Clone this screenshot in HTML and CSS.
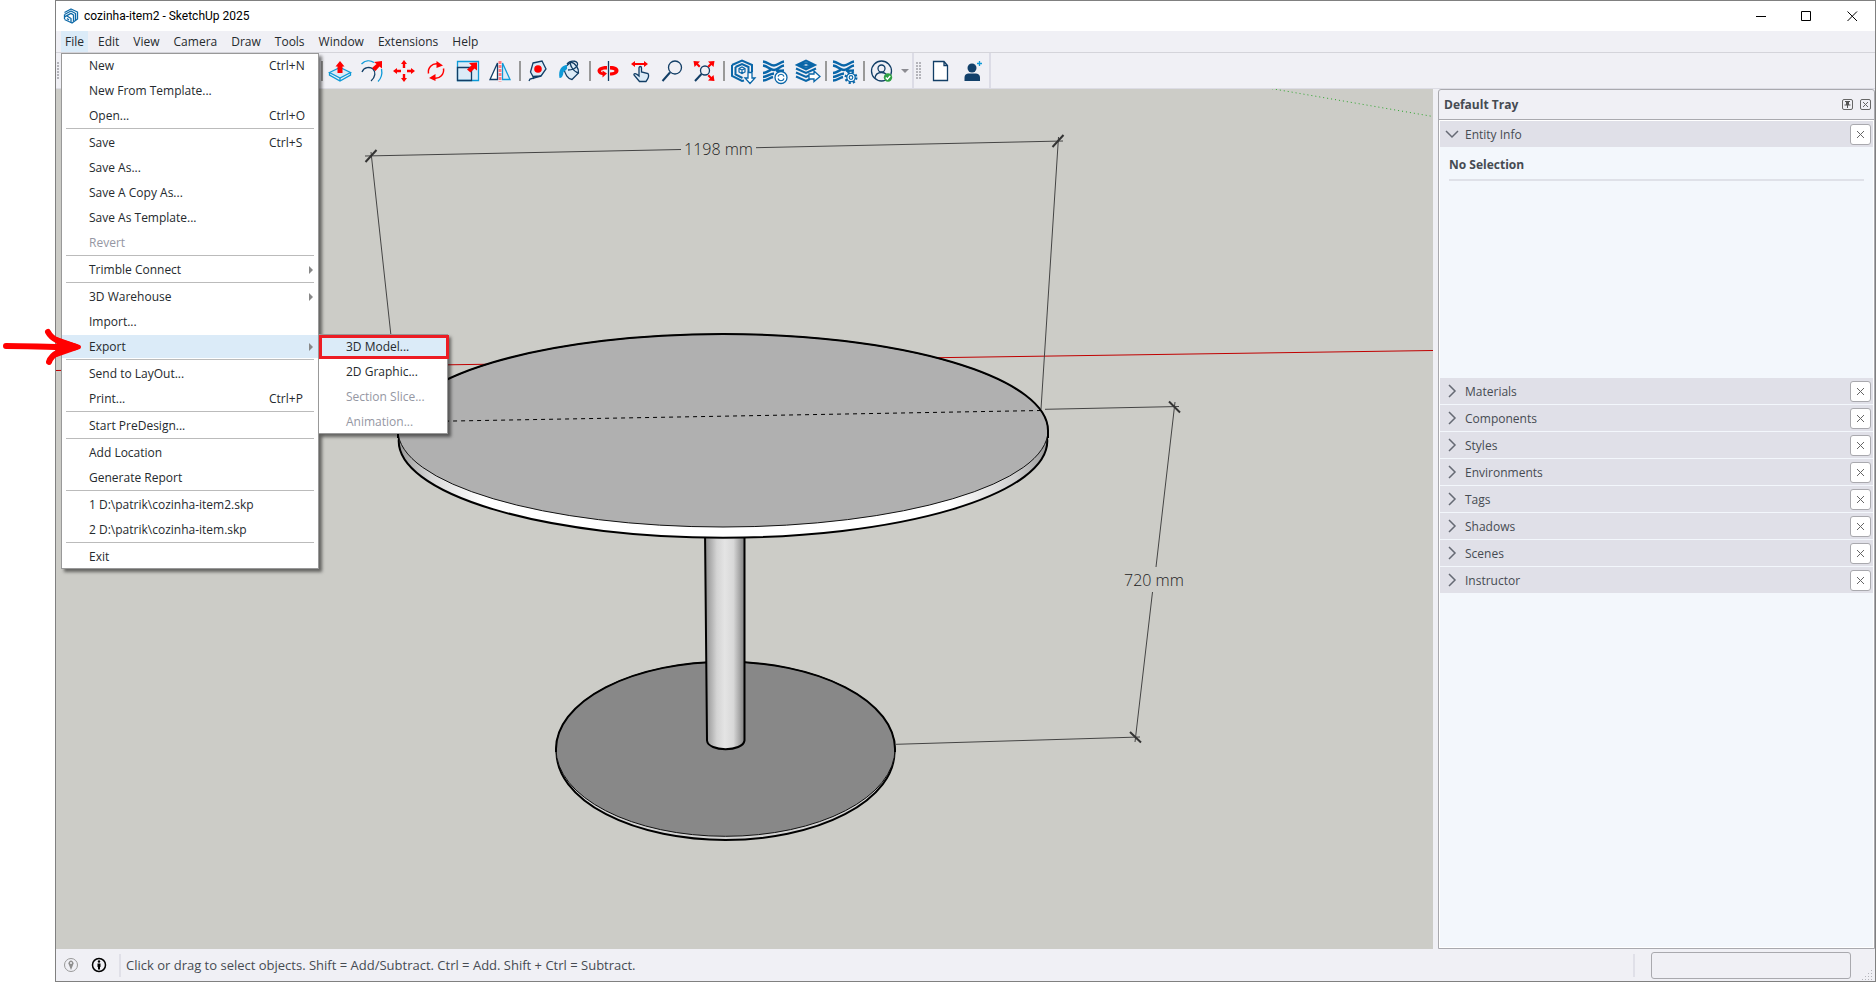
FILE: index.html
```html
<!DOCTYPE html>
<html lang="en">
<head>
  <meta charset="UTF-8" />
  <meta name="viewport" content="width=device-width, initial-scale=1.0"/>
  <title>cozinha-item2 - SketchUp 2025</title>
  <link rel="stylesheet" href="styles.css">
</head>
<body>
  <svg class="pointer" width="80" height="38" viewBox="0 0 80 38" fill="none" stroke="#f00" stroke-linecap="round" stroke-linejoin="round">
    <path d="M4 18 C25 18 45 19 66 19" stroke-width="6"/>
    <path d="M46 4 C50 12 60 15 74 19 C60 22 50 25 47 34" stroke-width="6"/>
    <path d="M54 11 L77 19 L54 27 L59 19 Z" fill="#f00" stroke-width="4"/>
  </svg>

  <div class="window">
    <header class="titlebar">
      <svg class="logo" width="16" height="16" viewBox="0 0 16 16" fill="none" stroke="#0f6aa8" stroke-width="1.3" stroke-linejoin="round">
        <path d="M1.5 4.5 L8 1 L14.5 4 V11 L9 15 L1.5 11.5"/>
        <path d="M1.5 6.5 L8 3 L12.5 5.5 V12"/>
        <path d="M1.5 8.8 L8 5.4 L10.5 7 V13.5"/>
        <path d="M1.5 6.5 V11 M4 8 L8 10.5 V14.5 M4 10.5 L6 12"/>
      </svg>
      <h1 class="title">cozinha-item2 - SketchUp 2025</h1>
      <button class="win-btn" aria-label="Minimize"><svg width="11" height="11"><path d="M1 5.5 H11"/></svg></button>
      <button class="win-btn" aria-label="Maximize"><svg width="11" height="11"><path d="M.5 .5 H9.5 V9.5 H.5 Z"/></svg></button>
      <button class="win-btn" aria-label="Close"><svg width="11" height="11"><path d="M.5 .5 L10 10 M10 .5 L.5 10"/></svg></button>
    </header>

    <nav class="menubar">
      <div class="menu-root">
        <button class="menu-btn open">File</button>
        <ul class="menu">
          <li><button>New <kbd>Ctrl+N</kbd></button></li>
          <li><button>New From Template...</button></li>
          <li><button>Open... <kbd>Ctrl+O</kbd></button></li>
          <li class="line"></li>
          <li><button>Save <kbd>Ctrl+S</kbd></button></li>
          <li><button>Save As...</button></li>
          <li><button>Save A Copy As...</button></li>
          <li><button>Save As Template...</button></li>
          <li><button disabled>Revert</button></li>
          <li class="line"></li>
          <li><button class="more">Trimble Connect</button></li>
          <li class="line"></li>
          <li><button class="more">3D Warehouse</button></li>
          <li><button>Import...</button></li>
          <li>
            <button class="more active">Export</button>
            <ul class="menu submenu">
              <li class="marked"><button class="active">3D Model...</button></li>
              <li><button>2D Graphic...</button></li>
              <li><button disabled>Section Slice...</button></li>
              <li><button disabled>Animation...</button></li>
            </ul>
          </li>
          <li class="line"></li>
          <li><button>Send to LayOut...</button></li>
          <li><button>Print... <kbd>Ctrl+P</kbd></button></li>
          <li class="line"></li>
          <li><button>Start PreDesign...</button></li>
          <li class="line"></li>
          <li><button>Add Location</button></li>
          <li><button>Generate Report</button></li>
          <li class="line"></li>
          <li><button>1 D:\patrik\cozinha-item2.skp</button></li>
          <li><button>2 D:\patrik\cozinha-item.skp</button></li>
          <li class="line"></li>
          <li><button>Exit</button></li>
        </ul>
      </div>
      <button class="menu-btn">Edit</button>
      <button class="menu-btn">View</button>
      <button class="menu-btn">Camera</button>
      <button class="menu-btn">Draw</button>
      <button class="menu-btn">Tools</button>
      <button class="menu-btn">Window</button>
      <button class="menu-btn">Extensions</button>
      <button class="menu-btn">Help</button>
    </nav>

    <div class="toolbar">
      <div class="tools">
        <span class="grip"></span>
        <button class="tool" aria-label="Search"></button>
        <button class="tool" aria-label="Select"></button>
        <button class="tool" aria-label="Eraser"></button>
        <button class="tool" aria-label="Line"></button>
        <button class="tool" aria-label="Freehand"></button>
        <button class="tool" aria-label="Arc"></button>
        <button class="tool" aria-label="Rectangle"></button>
        <button class="tool" aria-label="Circle"></button>
        <span class="sep"></span>
        <button class="tool" aria-label="Push/Pull">
          <svg viewBox="0 0 24 24">
            <path class="cy fill" d="M1.500 13.500 L12 8.500 L22.500 13.500 L12 19 Z"/>
            <path class="cy" d="M1.500 13.500 V16 L12 22 L22.500 16 V13.500 M12 19 V22"/>
            <path class="red" d="M12 2 L16.500 7.500 H14.500 V14 H9.500 V7.500 H7.500 Z"/>
          </svg>
        </button>
        <button class="tool" aria-label="Offset">
          <svg viewBox="0 0 24 24">
            <path class="cy" d="M1.500 5 C5 1.500 10 1 14 3.500 M21.500 10 C22.500 15 21.500 19 18 22.500"/>
            <path class="nv" d="M2 13 C4 8 10 7.500 13 10 C16 13 15.500 18 11 22"/>
            <path class="red" d="M22 2 V9.500 L19.500 7.500 L15.500 12 L12 9 L16.500 5 L14 3 Z"/>
          </svg>
        </button>
        <button class="tool" aria-label="Move">
          <svg viewBox="0 0 24 24">
            <path class="red" d="M12 1 L15 5 H13.200 V9 H10.800 V5 H9 Z M12 23 L15 19 H13.200 V15 H10.800 V19 H9 Z M1 12 L5 9 V10.800 H9 V13.200 H5 V15 Z M23 12 L19 9 V10.800 H15 V13.200 H19 V15 Z"/>
          </svg>
        </button>
        <button class="tool" aria-label="Rotate">
          <svg viewBox="0 0 24 24">
            <path class="rd" d="M4.500 14.500 C3.500 9 8 4 14 5 M19.500 9.500 C20.500 15 16 20 10 19"/>
            <path class="red" d="M12.500 2 L19 6.500 L12.500 9 Z M11.500 15 V22 L5 19 Z"/>
          </svg>
        </button>
        <button class="tool" aria-label="Scale">
          <svg viewBox="0 0 24 24">
            <path class="cy fill" d="M1.500 2.500 H22.500 V21.500 H1.500 Z"/>
            <path class="nv" d="M1.500 8.500 H15.500 V21.500 H1.500 Z"/>
            <path class="red" d="M21 3.500 V11.500 L18.500 9.500 L14.500 13.500 L11 10.500 L15.500 6.500 L13 4 Z"/>
          </svg>
        </button>
        <button class="tool" aria-label="Flip">
          <svg viewBox="0 0 24 24">
            <path class="nv white" d="M9.500 4 V20.500 H2 Z"/>
            <path class="cy fill" d="M14.500 4 V20.500 H22 Z"/>
            <path class="flip-line" d="M12 2 V22.500"/>
          </svg>
        </button>
        <span class="sep"></span>
        <button class="tool" aria-label="Tape Measure">
          <svg viewBox="0 0 24 24">
            <path class="nv fill" d="M7 4 L16 2 L20 10 L15 17 L7 17.500 L4.500 13 Z"/>
            <path class="nv" d="M15 17 L4 20 L3 22 M7 17.500 L8 20"/>
            <circle class="red" cx="12" cy="10" r="3.800"/>
          </svg>
        </button>
        <button class="tool" aria-label="Paint Bucket">
          <svg viewBox="0 0 24 24">
            <path class="nv fill" d="M6 9 L13 3 C17 4 21 9 20.500 14 L14 20.500 C10 20 6.500 15 6 9 Z"/>
            <path class="nv" d="M13 3 C11 6 16 13 20.500 14 M9 5 C13 0 22 2 19 7 C17 10 13 11 10 11"/>
            <path class="cyan" d="M9 6 C4 6 0 11 1.500 19 C4 19 5 17 5.500 13 L9 10 Z"/>
          </svg>
        </button>
        <span class="sep"></span>
        <button class="tool" aria-label="Orbit">
          <svg viewBox="0 0 24 24">
            <path class="nv" d="M12.500 2 V22"/>
            <path class="red" d="M11 7 C4 7 1.500 9.500 1.500 12 C2 15 5 16 6.500 16 V18.500 L11 14.500 L6.500 11.500 V13.500 C4 12.500 4 10.500 11 10.500 Z M14 7 C20 7 22.500 9 22.500 11.500 C22.500 15 19 16.500 14 16.500 V13.500 C20 13 20 11 14 10.500 Z"/>
          </svg>
        </button>
        <button class="tool" aria-label="Pan">
          <svg viewBox="0 0 24 24">
            <path class="nv fill" d="M11 9 C11 7 13.500 7 13.500 9 V13 L20 14.500 C21.500 17 20 20 18 22.500 H11.500 L6 16 C5.500 14 8 14 11 17 Z"/>
            <path class="red" d="M3 5 L7 2 V4 H16 V2 L20 5 L16 8 V6 H7 V8 Z"/>
          </svg>
        </button>
        <button class="tool" aria-label="Zoom">
          <svg viewBox="0 0 24 24">
            <circle class="nv" cx="15" cy="8.500" r="6.500"/>
            <path class="nv thick" d="M10 13.500 L2.500 22"/>
          </svg>
        </button>
        <button class="tool" aria-label="Zoom Extents">
          <svg viewBox="0 0 24 24">
            <circle class="nv" cx="13" cy="11.500" r="4.500"/>
            <path class="nv thick" d="M9.500 15 L3 22"/>
            <path class="red" d="M1.500 2 L8 2.500 L6 4.500 L8.500 7 L7 8.500 L4.500 6 L2.500 8 Z M22.500 2 L16 2.500 L18 4.500 L15.500 7 L17 8.500 L19.500 6 L21.500 8 Z M22.500 22 L16 21.500 L18 19.500 L15.500 17 L17 15.500 L19.500 18 L21.500 16 Z"/>
          </svg>
        </button>
        <span class="sep"></span>
        <button class="tool" aria-label="3D Warehouse">
          <svg viewBox="0 0 24 24">
            <path class="bl" d="M2 6 L12 1.500 L22 6 V13 M14 21.500 L12 22 L2 17 V6"/>
            <path class="bl" d="M5.500 8 L12 5 L18.500 8 V13 M12.500 19 L5.500 15.500 V8"/>
            <path class="bl thin" d="M9 9.500 L12 8 L15 9.500 V13 L12 14.500 L9 13 Z M9 9.500 L12 11 L15 9.500 M12 11 V14.500"/>
            <path class="badge" d="M18 13.500 H22 V19 H25 L20 24.500 L15 19 H18 Z"/>
          </svg>
        </button>
        <button class="tool" aria-label="Extension Warehouse">
          <svg viewBox="0 0 24 24">
            <path class="bl wave" d="M1 2.500 C6 3 8 6.500 12 6.500 C16 6.500 18 3 22 2.500 M1 6.500 C6 7 8 11 12 11 C16 11 18 7 22 6.500 M1 14 C5 14 7 11 9 11 M1 18 C5 18 7 15 12 14.500 M1 21.500 C5 21.500 7 19 11 18 M14 11.500 C17 12 19 11.500 22 11.500"/>
            <circle class="badge" cx="19" cy="18.500" r="6"/>
            <path class="bl thin" d="M16 17.500 C17 14.500 21 14.500 22 17.500 M22 19.500 C21 22.500 17 22.500 16 19.500"/>
          </svg>
        </button>
        <button class="tool" aria-label="Send to LayOut">
          <svg viewBox="0 0 24 24">
            <path class="bl" d="M3 6 L12 1.500 L21 6 L12 10.500 Z M7 6 L12 4 L17 6 L12 8 Z M2 9.500 L12 14 L22 9.500 M2 13.500 L12 18 L15 16.500 M2 17.500 L12 22 L16 20"/>
            <path class="badge" d="M15 15 H20 V12 L26 17.500 L20 22.500 V20 H15 Z"/>
          </svg>
        </button>
        <span class="sep"></span>
        <button class="tool" aria-label="Extension Manager">
          <svg viewBox="0 0 24 24">
            <path class="bl wave" d="M1 2.500 C6 3 8 6.500 12 6.500 C16 6.500 18 3 22 2.500 M1 6.500 C6 7 8 11 12 11 C16 11 18 7 22 6.500 M1 14 C5 14 7 11 9 11 M1 18 C5 18 7 15 12 14.500 M1 21.500 C5 21.500 7 19 11 18 M14 11.500 C17 12 19 11.500 22 11.500"/>
            <circle class="badge gear" cx="19" cy="18.500" r="5"/>
            <circle class="badge" cx="19" cy="18.500" r="4.200"/>
            <circle class="bl thin" cx="19" cy="18.500" r="1.800"/>
          </svg>
        </button>
        <span class="sep"></span>
        <button class="tool" aria-label="Account">
          <svg viewBox="0 0 24 24">
            <circle class="nv" cx="11.500" cy="12" r="10"/>
            <circle class="nv" cx="11.500" cy="9.500" r="3.500"/>
            <path class="nv" d="M5 19 C5.500 15 8 13.500 11.500 13.500 C15 13.500 16 15 17 16"/>
            <circle class="ok" cx="18" cy="18.500" r="4.200"/>
            <path class="tick" d="M15.800 18.500 L17.400 20.200 L20.200 17"/>
          </svg>
        </button>
        <button class="caret" aria-label="Account options"></button>
      </div>
      <div class="tools">
        <span class="grip wide"></span>
        <button class="tool" aria-label="New file">
          <svg viewBox="0 0 24 24"><path class="nv white" d="M4.500 2.500 H15 L18.500 6.500 V21.500 H4.500 Z M15 2.500 V6.500 H18.500"/></svg>
        </button>
        <button class="tool" aria-label="Invite">
          <svg viewBox="0 0 24 24">
            <circle class="navy" cx="11" cy="9" r="4.500"/>
            <path class="navy" d="M3.500 22 V19 C3.500 15.500 5.500 14.500 8 14.500 H14 C17 14.500 19 15.500 19 19 V22 Z"/>
            <path class="cy" d="M18.500 2 V7 M16 4.500 H21"/>
          </svg>
        </button>
      </div>
    </div>

    <div class="workspace">
      <main class="viewport">
        <svg class="scene" viewBox="56 89 1377 860" preserveAspectRatio="xMinYMin slice">
          <defs>
            <linearGradient id="rim">
              <stop offset="0" stop-color="#999"/>
              <stop offset=".05" stop-color="#d8d8d8"/>
              <stop offset=".13" stop-color="#fff"/>
              <stop offset=".85" stop-color="#fff"/>
              <stop offset=".95" stop-color="#cfcfcf"/>
              <stop offset="1" stop-color="#999"/>
            </linearGradient>
            <linearGradient id="leg">
              <stop offset="0" stop-color="#8e8e8e"/>
              <stop offset=".3" stop-color="#d4d4d4"/>
              <stop offset=".5" stop-color="#e4e4e4"/>
              <stop offset=".72" stop-color="#d8d8d8"/>
              <stop offset="1" stop-color="#808080"/>
            </linearGradient>
          </defs>

          <!-- axes -->
          <path class="axis-red" d="M56 370.500 L1433 350.500"/>
          <path class="axis-green" d="M1268 88 L1433 116.500"/>

          <!-- base -->
          <ellipse class="edge" cx="725.500" cy="752" rx="169" ry="88" fill="#d4d4d4"/>
          <ellipse class="base" cx="725.500" cy="749" rx="169.500" ry="87.300"/>
          <path class="edge" fill="none" d="M556 752 V749 A169.500 87.300 0 0 1 895 749 V752"/>

          <!-- leg -->
          <path class="edge" fill="url(#leg)" d="M705 530 L707 740.500 C708 752 743 752 744.500 740.500 V530 Z"/>

          <!-- top -->
          <ellipse class="edge" cx="723" cy="441" rx="324.300" ry="96.700" fill="url(#rim)"/>
          <ellipse class="top" cx="723" cy="430.500" rx="325" ry="96.500"/>
          <path class="edge" fill="none" d="M398 438 V430.500 A325 96.500 0 0 1 1048 430.500 V438"/>
          <path class="hidden-line" d="M1041 410.500 L398 422"/>

          <!-- dimensions -->
          <path class="dim" d="M365 156 L681 149.500 M756 147.700 L1063 141 M371 152 L391 336 M1058.500 137 L1041 409"/>
          <path class="slash" d="M365.500 162 L376.500 150 M1052.500 147 L1063.500 135"/>
          <path class="dim" d="M1045 409.300 L1179 406.500 M1175 402 L1156 567 M1152.500 592 L1135 742 M896 744.300 L1140 737"/>
          <path class="slash" d="M1169 401.500 L1180 412.500 M1130 732 L1141 742.500"/>
          <text class="dim-text" x="684" y="155">1198 mm</text>
          <text class="dim-text" x="1124" y="586">720 mm</text>
        </svg>
      </main>

      <aside class="tray">
        <div class="tray-head">
          <h2>Default Tray</h2>
          <button class="mini" aria-label="Auto hide"><svg width="11" height="11"><rect class="box" x=".5" y=".5" width="10" height="10" rx="1.500"/><path class="pin" d="M3 2 H8 V3 H7 V5.500 H8.500 V6.500 H6 V9 H5 V6.500 H2.500 V5.500 H4 V3 H3 Z"/></svg></button>
          <button class="mini" aria-label="Close tray"><svg width="11" height="11"><rect class="box" x=".5" y=".5" width="10" height="10" rx="1.500"/><path class="x" d="M3 3 L8 8 M8 3 L3 8"/></svg></button>
        </div>
        <div class="panels">
          <section class="panel expanded">
            <div class="panel-head">
              <button class="panel-toggle"><svg width="14" height="14"><path d="M1 4 L7 10 L13 4"/></svg>Entity Info</button>
              <button class="panel-close" aria-label="Close Entity Info"><svg width="9" height="9"><path d="M1 1 L8 8 M8 1 L1 8"/></svg></button>
            </div>
            <div class="panel-body"><h3>No Selection</h3></div>
          </section>
          <section class="panel">
            <div class="panel-head">
              <button class="panel-toggle"><svg width="14" height="14"><path d="M4 1 L10 7 L4 13"/></svg>Materials</button>
              <button class="panel-close" aria-label="Close Materials"><svg width="9" height="9"><path d="M1 1 L8 8 M8 1 L1 8"/></svg></button>
            </div>
          </section>
          <section class="panel">
            <div class="panel-head">
              <button class="panel-toggle"><svg width="14" height="14"><path d="M4 1 L10 7 L4 13"/></svg>Components</button>
              <button class="panel-close" aria-label="Close Components"><svg width="9" height="9"><path d="M1 1 L8 8 M8 1 L1 8"/></svg></button>
            </div>
          </section>
          <section class="panel">
            <div class="panel-head">
              <button class="panel-toggle"><svg width="14" height="14"><path d="M4 1 L10 7 L4 13"/></svg>Styles</button>
              <button class="panel-close" aria-label="Close Styles"><svg width="9" height="9"><path d="M1 1 L8 8 M8 1 L1 8"/></svg></button>
            </div>
          </section>
          <section class="panel">
            <div class="panel-head">
              <button class="panel-toggle"><svg width="14" height="14"><path d="M4 1 L10 7 L4 13"/></svg>Environments</button>
              <button class="panel-close" aria-label="Close Environments"><svg width="9" height="9"><path d="M1 1 L8 8 M8 1 L1 8"/></svg></button>
            </div>
          </section>
          <section class="panel">
            <div class="panel-head">
              <button class="panel-toggle"><svg width="14" height="14"><path d="M4 1 L10 7 L4 13"/></svg>Tags</button>
              <button class="panel-close" aria-label="Close Tags"><svg width="9" height="9"><path d="M1 1 L8 8 M8 1 L1 8"/></svg></button>
            </div>
          </section>
          <section class="panel">
            <div class="panel-head">
              <button class="panel-toggle"><svg width="14" height="14"><path d="M4 1 L10 7 L4 13"/></svg>Shadows</button>
              <button class="panel-close" aria-label="Close Shadows"><svg width="9" height="9"><path d="M1 1 L8 8 M8 1 L1 8"/></svg></button>
            </div>
          </section>
          <section class="panel">
            <div class="panel-head">
              <button class="panel-toggle"><svg width="14" height="14"><path d="M4 1 L10 7 L4 13"/></svg>Scenes</button>
              <button class="panel-close" aria-label="Close Scenes"><svg width="9" height="9"><path d="M1 1 L8 8 M8 1 L1 8"/></svg></button>
            </div>
          </section>
          <section class="panel">
            <div class="panel-head">
              <button class="panel-toggle"><svg width="14" height="14"><path d="M4 1 L10 7 L4 13"/></svg>Instructor</button>
              <button class="panel-close" aria-label="Close Instructor"><svg width="9" height="9"><path d="M1 1 L8 8 M8 1 L1 8"/></svg></button>
            </div>
          </section>
        </div>
      </aside>
    </div>

    <footer class="statusbar">
      <button class="status-btn" aria-label="Geo-location">
        <svg width="16" height="16" viewBox="0 0 16 16"><circle cx="8" cy="8" r="6.500" fill="none" stroke="#999"/><path d="M8 13 L6 8 A2.600 2.600 0 1 1 10 8 Z" fill="#8e8e8e"/><circle cx="8" cy="6" r="1" fill="#f0f0f5"/></svg>
      </button>
      <button class="status-btn" aria-label="Credits">
        <svg width="16" height="16" viewBox="0 0 16 16"><circle cx="8" cy="8" r="6.500" fill="none" stroke="#000" stroke-width="1.500"/><circle cx="8" cy="4.500" r="1.200"/><path d="M6.500 6.500 H9.500 V10 H9 V12.500 H7 V10 H6.500 Z"/></svg>
      </button>
      <span class="divider"></span>
      <p class="hint">Click or drag to select objects. Shift = Add/Subtract. Ctrl = Add. Shift + Ctrl = Subtract.</p>
      <span class="divider"></span>
      <input class="measure" type="text" aria-label="Measurements">
      <svg class="resize" width="11" height="11" fill="#b4b4ba"><path d="M9 0h1v1h-1z M6 3h1v1h-1z M9 3h1v1h-1z M3 6h1v1h-1z M6 6h1v1h-1z M9 6h1v1h-1z M0 9h1v1h-1z M3 9h1v1h-1z M6 9h1v1h-1z M9 9h1v1h-1z"/></svg>
    </footer>
  </div>
</body>
</html>
```
FILE: styles.css
```css
:root {
  --chrome: #f0f0f5;
  --text: #252a2e;
  --muted: #464b52;
  --hover: #dbebf8;
  --canvas: #ccccc7;
  --navy: #123e66;
  --cyan: #0e9ad8;
  --blue: #0a66a8;
}

* {
  box-sizing: border-box;
}

body {
  margin: 0;
  height: 100vh;
  padding-left: 55px;
  background: #fff;
  color: var(--text);
  font-family: 'Open Sans', 'Noto Sans', sans-serif;
  font-size: 12px;
  overflow: hidden;
}

button {
  padding: 0;
  border: none;
  background: none;
  color: inherit;
  font: inherit;
}

h1, h2, h3, p, ul {
  margin: 0;
  padding: 0;
}

.window {
  display: flex;
  flex-direction: column;
  height: 100%;
  border: 1px solid #808080;
  background: var(--chrome);
}

.pointer {
  position: absolute;
  left: 2px;
  top: 328px;
  z-index: 20;
}

/* title bar */
.titlebar {
  display: flex;
  align-items: center;
  height: 30px;
  padding-left: 7px;
  background: #fff;
}

.title {
  flex: 1;
  margin-left: 5px;
  color: #000;
  font-family: Roboto, sans-serif;
  font-size: 12px;
  font-weight: 400;
}

.win-btn {
  display: flex;
  align-items: center;
  justify-content: center;
  width: 46px;
  height: 30px;
}

.win-btn path {
  fill: none;
  stroke: #000;
}

/* menus */
.menubar {
  display: flex;
  gap: 6px;
  height: 22px;
  padding-left: 5px;
  border-bottom: 1px solid #d4d4da;
}

.menu-root {
  position: relative;
}

.menu-btn {
  height: 21px;
  padding: 0 4px;
}

.menu-btn.open {
  background: var(--hover);
}

.menu {
  position: absolute;
  top: 22px;
  left: 0;
  z-index: 10;
  width: 258px;
  border: 1px solid #999;
  background: #fff;
  box-shadow: 3px 3px 3px rgba(0, 0, 0, 0.5);
  list-style: none;
}

.menu li {
  position: relative;
  margin-bottom: 2px;
}

.menu li:last-child {
  margin-bottom: 0;
}

.menu .line {
  height: 1px;
  margin: -1px 4px 2px;
  background: #bbb;
}

.menu button {
  display: flex;
  align-items: center;
  width: 100%;
  height: 23px;
  padding-left: 27px;
  text-align: left;
  white-space: nowrap;
}

.menu button:disabled {
  color: #9597a3;
}

.menu .active {
  background: var(--hover);
}

.menu kbd {
  width: 49px;
  margin-left: auto;
  font: inherit;
}

.menu .more::after {
  content: "";
  margin-left: auto;
  margin-right: 5px;
  border: 4px solid transparent;
  border-left-color: #888;
  border-right-width: 0;
}

.menu .submenu {
  top: -1px;
  left: 100%;
  width: 130px;
}

.marked::after {
  content: "";
  position: absolute;
  inset: 0 -2px -1px 0;
  border: 3px solid #ed1c24;
}

/* toolbar */
.toolbar {
  display: flex;
  height: 36px;
  border-bottom: 1px solid #dcdce4;
}

.tools {
  display: flex;
  align-items: center;
  border-right: 2px solid #dcdce6;
}

.grip {
  width: 6px;
  height: 17px;
  background: radial-gradient(circle at 2px 1px, #b4b4ba 1px, transparent 1px) 0 0 / 6px 3px;
}

.grip.wide {
  margin: 0 4px 0 1px;
  background-size: 3px 3px;
}

.tool {
  display: flex;
  align-items: center;
  justify-content: center;
  width: 32px;
  height: 32px;
}

.tool svg {
  width: 24px;
  height: 24px;
  fill: none;
  overflow: visible;
}

.sep {
  width: 2px;
  height: 20px;
  margin: 0 1px 0 3px;
  background: #999;
}

.caret {
  width: 14px;
  height: 32px;
  padding: 0 3px;
}

.caret::after {
  content: "";
  display: block;
  border: 4px solid transparent;
  border-top-color: #8c8c92;
  border-bottom-width: 0;
}

.nv { stroke: var(--navy); stroke-width: 1.3; }
.cy { stroke: var(--cyan); stroke-width: 1.3; }
.bl { stroke: var(--blue); stroke-width: 2; }
.rd { stroke: #f00; stroke-width: 1.5; }
.fill { fill: #dcebf7; }
.white { fill: #fff; }
.thick { stroke-width: 2; }
.thin { stroke-width: 1.2; }
.wave { stroke-width: 2.4; }
.red { fill: #f00; }
.cyan { fill: var(--cyan); }
.navy { fill: #12406a; }
.badge { fill: #fff; stroke: var(--blue); stroke-width: 1.3; }
.gear { stroke-width: 3; stroke-dasharray: 2 1.93; }
.ok { fill: #2fa044; }
.tick { stroke: #fff; stroke-width: 1.4; }
.flip-line { stroke: #ff7a80; stroke-width: 3; stroke-dasharray: 3 1; }

/* workspace */
.workspace {
  display: flex;
  flex: 1;
  min-height: 0;
  gap: 5px;
}

.viewport {
  flex: 1;
  min-width: 0;
  background: var(--canvas);
}

.scene {
  display: block;
  width: 100%;
  height: 100%;
}

.axis-red { stroke: #c00000; }
.axis-green { stroke: #2ba52b; stroke-dasharray: 1 3; }
.edge { stroke: #000; stroke-width: 2; }
.base { fill: #888; stroke: #111; }
.top { fill: #b0b0b0; stroke: #111; }
.hidden-line { stroke: #000; stroke-dasharray: 4 4; }
.dim { fill: none; stroke: #444; }
.slash { stroke: #333; stroke-width: 2; }

.dim-text {
  fill: #222;
  font-size: 16px;
  font-weight: 300;
}

/* tray */
.tray {
  display: flex;
  flex-direction: column;
  width: 437px;
  border: 1px solid #a9a9ae;
  border-radius: 3px 3px 0 0;
  color: var(--muted);
}

.tray-head {
  display: flex;
  align-items: center;
  gap: 7px;
  height: 30px;
  padding: 0 3px 0 5px;
  border-bottom: 1px solid #a9a9ae;
}

.tray-head h2 {
  flex: 1;
  font-size: 12px;
}

.mini {
  display: flex;
}

.box,
.mini .x {
  fill: none;
  stroke: #666;
}

.pin {
  fill: #555;
}

.panels {
  display: flex;
  flex: 1;
  flex-direction: column;
  gap: 1px;
  border: 1px solid #fff;
  background: #f3f7fc;
}

.panel-head {
  display: flex;
  align-items: center;
  height: 26px;
  padding-right: 2px;
  background: #e0e0e8;
}

.panel-toggle {
  display: flex;
  flex: 1;
  align-items: center;
  gap: 6px;
  height: 26px;
  padding-left: 5px;
}

.panel-toggle path {
  fill: none;
  stroke: #666a74;
  stroke-width: 1.5;
}

.panel-close {
  display: flex;
  align-items: center;
  justify-content: center;
  width: 21px;
  height: 21px;
  border: 1px solid #a9a9ae;
  border-radius: 3px;
  background: #fff;
}

.panel-close path {
  stroke: #666;
}

.panel-body {
  height: 230px;
  padding: 9px 9px 0;
}

.panel-body h3 {
  padding-bottom: 6px;
  border-bottom: 2px solid #dfe1e8;
  font-size: 12px;
  line-height: 17px;
}

/* status bar */
.statusbar {
  display: flex;
  align-items: center;
  height: 32px;
  padding: 0 2px 0 7px;
  color: var(--muted);
}

.status-btn {
  display: flex;
  margin-right: 12px;
}

.divider {
  width: 2px;
  height: 23px;
  background: #e0e0e8;
}

.hint {
  flex: 1;
  padding-left: 5px;
  font-size: 13px;
}

.measure {
  width: 200px;
  height: 27px;
  margin: 0 11px 0 16px;
  border: 1px solid #a9a9ae;
  border-radius: 3px;
  background: var(--chrome);
}

.resize {
  align-self: flex-end;
}
```
